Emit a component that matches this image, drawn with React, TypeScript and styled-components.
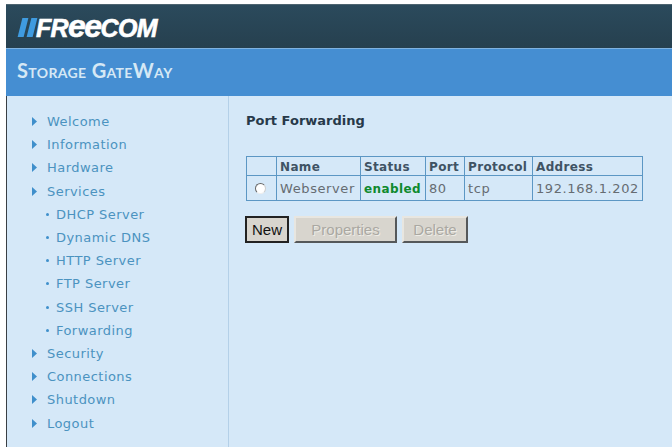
import React from 'react';
import styled, { createGlobalStyle } from 'styled-components';

const MENU = [
  { label: 'Welcome' },
  { label: 'Information' },
  { label: 'Hardware' },
  { label: 'Services' },
  { label: 'DHCP Server', sub: true },
  { label: 'Dynamic DNS', sub: true },
  { label: 'HTTP Server', sub: true },
  { label: 'FTP Server', sub: true },
  { label: 'SSH Server', sub: true },
  { label: 'Forwarding', sub: true },
  { label: 'Security' },
  { label: 'Connections' },
  { label: 'Shutdown' },
  { label: 'Logout' },
];

const GlobalStyle = createGlobalStyle`
  html, body {
    margin: 0;
    padding: 0;
    background: #fff;
  }
`;

function Arrow() {
  return (
    <ArrowIcon width="5" height="9" viewBox="0 0 5 9">
      <path d="M0 0 L5 4.5 L0 9 Z" fill="#3f8fcb" />
    </ArrowIcon>
  );
}

export default function App() {
  return (
    <>
      <GlobalStyle />
      <Page>
        <TopBar>
          <Logo>
            <Bars>
              <Bar />
              <Bar />
            </Bars>
            <LogoText>
              FR<LogoE>ee</LogoE>COM
            </LogoText>
          </Logo>
        </TopBar>
        <TitleBar>
          <Title>Storage GateWay</Title>
        </TitleBar>
        <Body>
          <Side>
            {MENU.map(item => (
              <MenuItem key={item.label} sub={!!item.sub}>
                {item.sub ? <Dot /> : <Arrow />}
                {item.label}
              </MenuItem>
            ))}
          </Side>
          <Main>
            <Heading>Port Forwarding</Heading>
            <Table>
              <colgroup>
                <col width="30" />
                <col width="84" />
                <col width="65" />
                <col width="39" />
                <col width="68" />
                <col width="110" />
              </colgroup>
              <thead>
                <tr>
                  <Th />
                  <Th>Name</Th>
                  <Th>Status</Th>
                  <Th>Port</Th>
                  <Th>Protocol</Th>
                  <Th>Address</Th>
                </tr>
              </thead>
              <tbody>
                <tr>
                  <Td>
                    <Radio />
                  </Td>
                  <Td>Webserver</Td>
                  <Td>
                    <Enabled>enabled</Enabled>
                  </Td>
                  <Td>80</Td>
                  <Td>tcp</Td>
                  <Td>192.168.1.202</Td>
                </tr>
              </tbody>
            </Table>
            <Buttons>
              <Button size={44}>New</Button>
              <Button disabled size={103}>
                Properties
              </Button>
              <Button disabled size={66}>
                Delete
              </Button>
            </Buttons>
          </Main>
        </Body>
      </Page>
    </>
  );
}

const Page = styled.div`
  display: flex;
  flex-direction: column;
  width: 672px;
  height: 447px;
  box-sizing: border-box;
  padding: 4px 0 0 6px;
  overflow: hidden;
  font-family: Verdana, 'DejaVu Sans', sans-serif;
`;
const TopBar = styled.div`
  display: flex;
  align-items: center;
  height: 44px;
  box-sizing: border-box;
  padding-left: 12px;
  background: linear-gradient(#2b4a5c, #26404f);
  border-top: 1px solid #4d6470;
  flex: none;
`;
const Logo = styled.div`
  display: flex;
  align-items: center;
  gap: 1px;
  margin-top: 2px;
`;
const Bars = styled.div`
  display: flex;
  gap: 3px;
  padding-left: 2px;
`;
const Bar = styled.div`
  width: 6px;
  height: 19px;
  background: #3f9be0;
  transform: skewX(-14deg);
`;
const LogoText = styled.div`
  font-family: 'Liberation Sans', Arial, sans-serif;
  font-size: 25px;
  font-weight: bold;
  font-style: italic;
  line-height: 28px;
  letter-spacing: -0.7px;
  color: #fff;
  -webkit-text-stroke: 0.6px #fff;
`;
const LogoE = styled.span`
  font-size: 32px;
  line-height: 0;
  letter-spacing: -1.5px;
`;
const TitleBar = styled.div`
  display: flex;
  align-items: center;
  height: 48px;
  padding-left: 11px;
  background: #458ed2;
  border-top: 1px solid #7fb2e0;
  box-sizing: border-box;
  flex: none;
`;
const Title = styled.div`
  margin-top: -5px;
  font-family: 'Lato', 'Open Sans', sans-serif;
  font-size: 20px;
  font-weight: bold;
  font-variant: small-caps;
  letter-spacing: 0.35px;
  color: #d5e8f5;
`;
const Body = styled.div`
  display: flex;
  flex: 1;
  min-height: 0;
  background: #d5e8f8;
  border-left: 1px solid #3a3f44;
`;
const Side = styled.div`
  width: 222px;
  box-sizing: border-box;
  padding-top: 14px;
  border-right: 1px solid #b4d0e8;
  flex: none;
`;
const MenuItem = styled.div<{ sub: boolean }>`
  display: flex;
  align-items: center;
  height: 23.2px;
  padding-left: ${({ sub }) => (sub ? 39 : 25)}px;
  gap: ${({ sub }) => (sub ? 7 : 10)}px;
  font-size: 13px;
  letter-spacing: 0.45px;
  color: #4b93c0;
`;
const ArrowIcon = styled.svg`
  flex: none;
`;
const Dot = styled.span`
  flex: none;
  width: 3px;
  height: 3px;
  border-radius: 50%;
  background: #3f8fcb;
`;
const Main = styled.div`
  flex: 1;
  padding: 18px 0 0 17px;
`;
const Heading = styled.div`
  height: 42px;
  font-size: 13px;
  font-weight: bold;
  line-height: 14px;
  color: #27394a;
`;
const Table = styled.table`
  border-collapse: collapse;
  table-layout: fixed;
  width: 396px;
  border: 1px solid #5c97c4;
`;
const Th = styled.th`
  height: 17px;
  padding: 1px 0 0 3px;
  border: 1px solid #5c97c4;
  text-align: left;
  font-size: 12px;
  font-weight: bold;
  letter-spacing: 0.35px;
  color: #3f5364;
`;
const Td = styled.td`
  height: 24px;
  padding: 0 0 0 3px;
  border: 1px solid #5c97c4;
  font-size: 13px;
  letter-spacing: 0.6px;
  white-space: nowrap;
  color: #666c72;
`;
const Radio = styled.span`
  display: block;
  width: 9px;
  height: 9px;
  margin-left: 5px;
  border-radius: 50%;
  background: #fff;
  border: 1px solid #777;
  border-color: #666 #ccc #eee #666;
`;
const Enabled = styled.span`
  font-size: 12px;
  font-weight: bold;
  letter-spacing: 0.4px;
  color: #0f8a2e;
`;
const Buttons = styled.div`
  display: flex;
  gap: 5px;
  margin-top: 15px;
  margin-left: -1px;
`;
const Button = styled.button<{ size: number }>`
  width: ${({ size }) => size}px;
  height: 27px;
  padding: 0;
  font-family: 'Liberation Sans', Arial, sans-serif;
  font-size: 15px;
  background: #d8d5ce;
  color: ${({ disabled }) => (disabled ? '#aaa8a2' : '#111')};
  text-shadow: ${({ disabled }) => (disabled ? '1px 1px 0 #eeece6' : 'none')};
  border: 2px solid;
  border-color: ${({ disabled }) =>
    disabled ? '#e8e6e0 #55585a #55585a #e8e6e0' : '#222 #222 #222 #222'};
`;
